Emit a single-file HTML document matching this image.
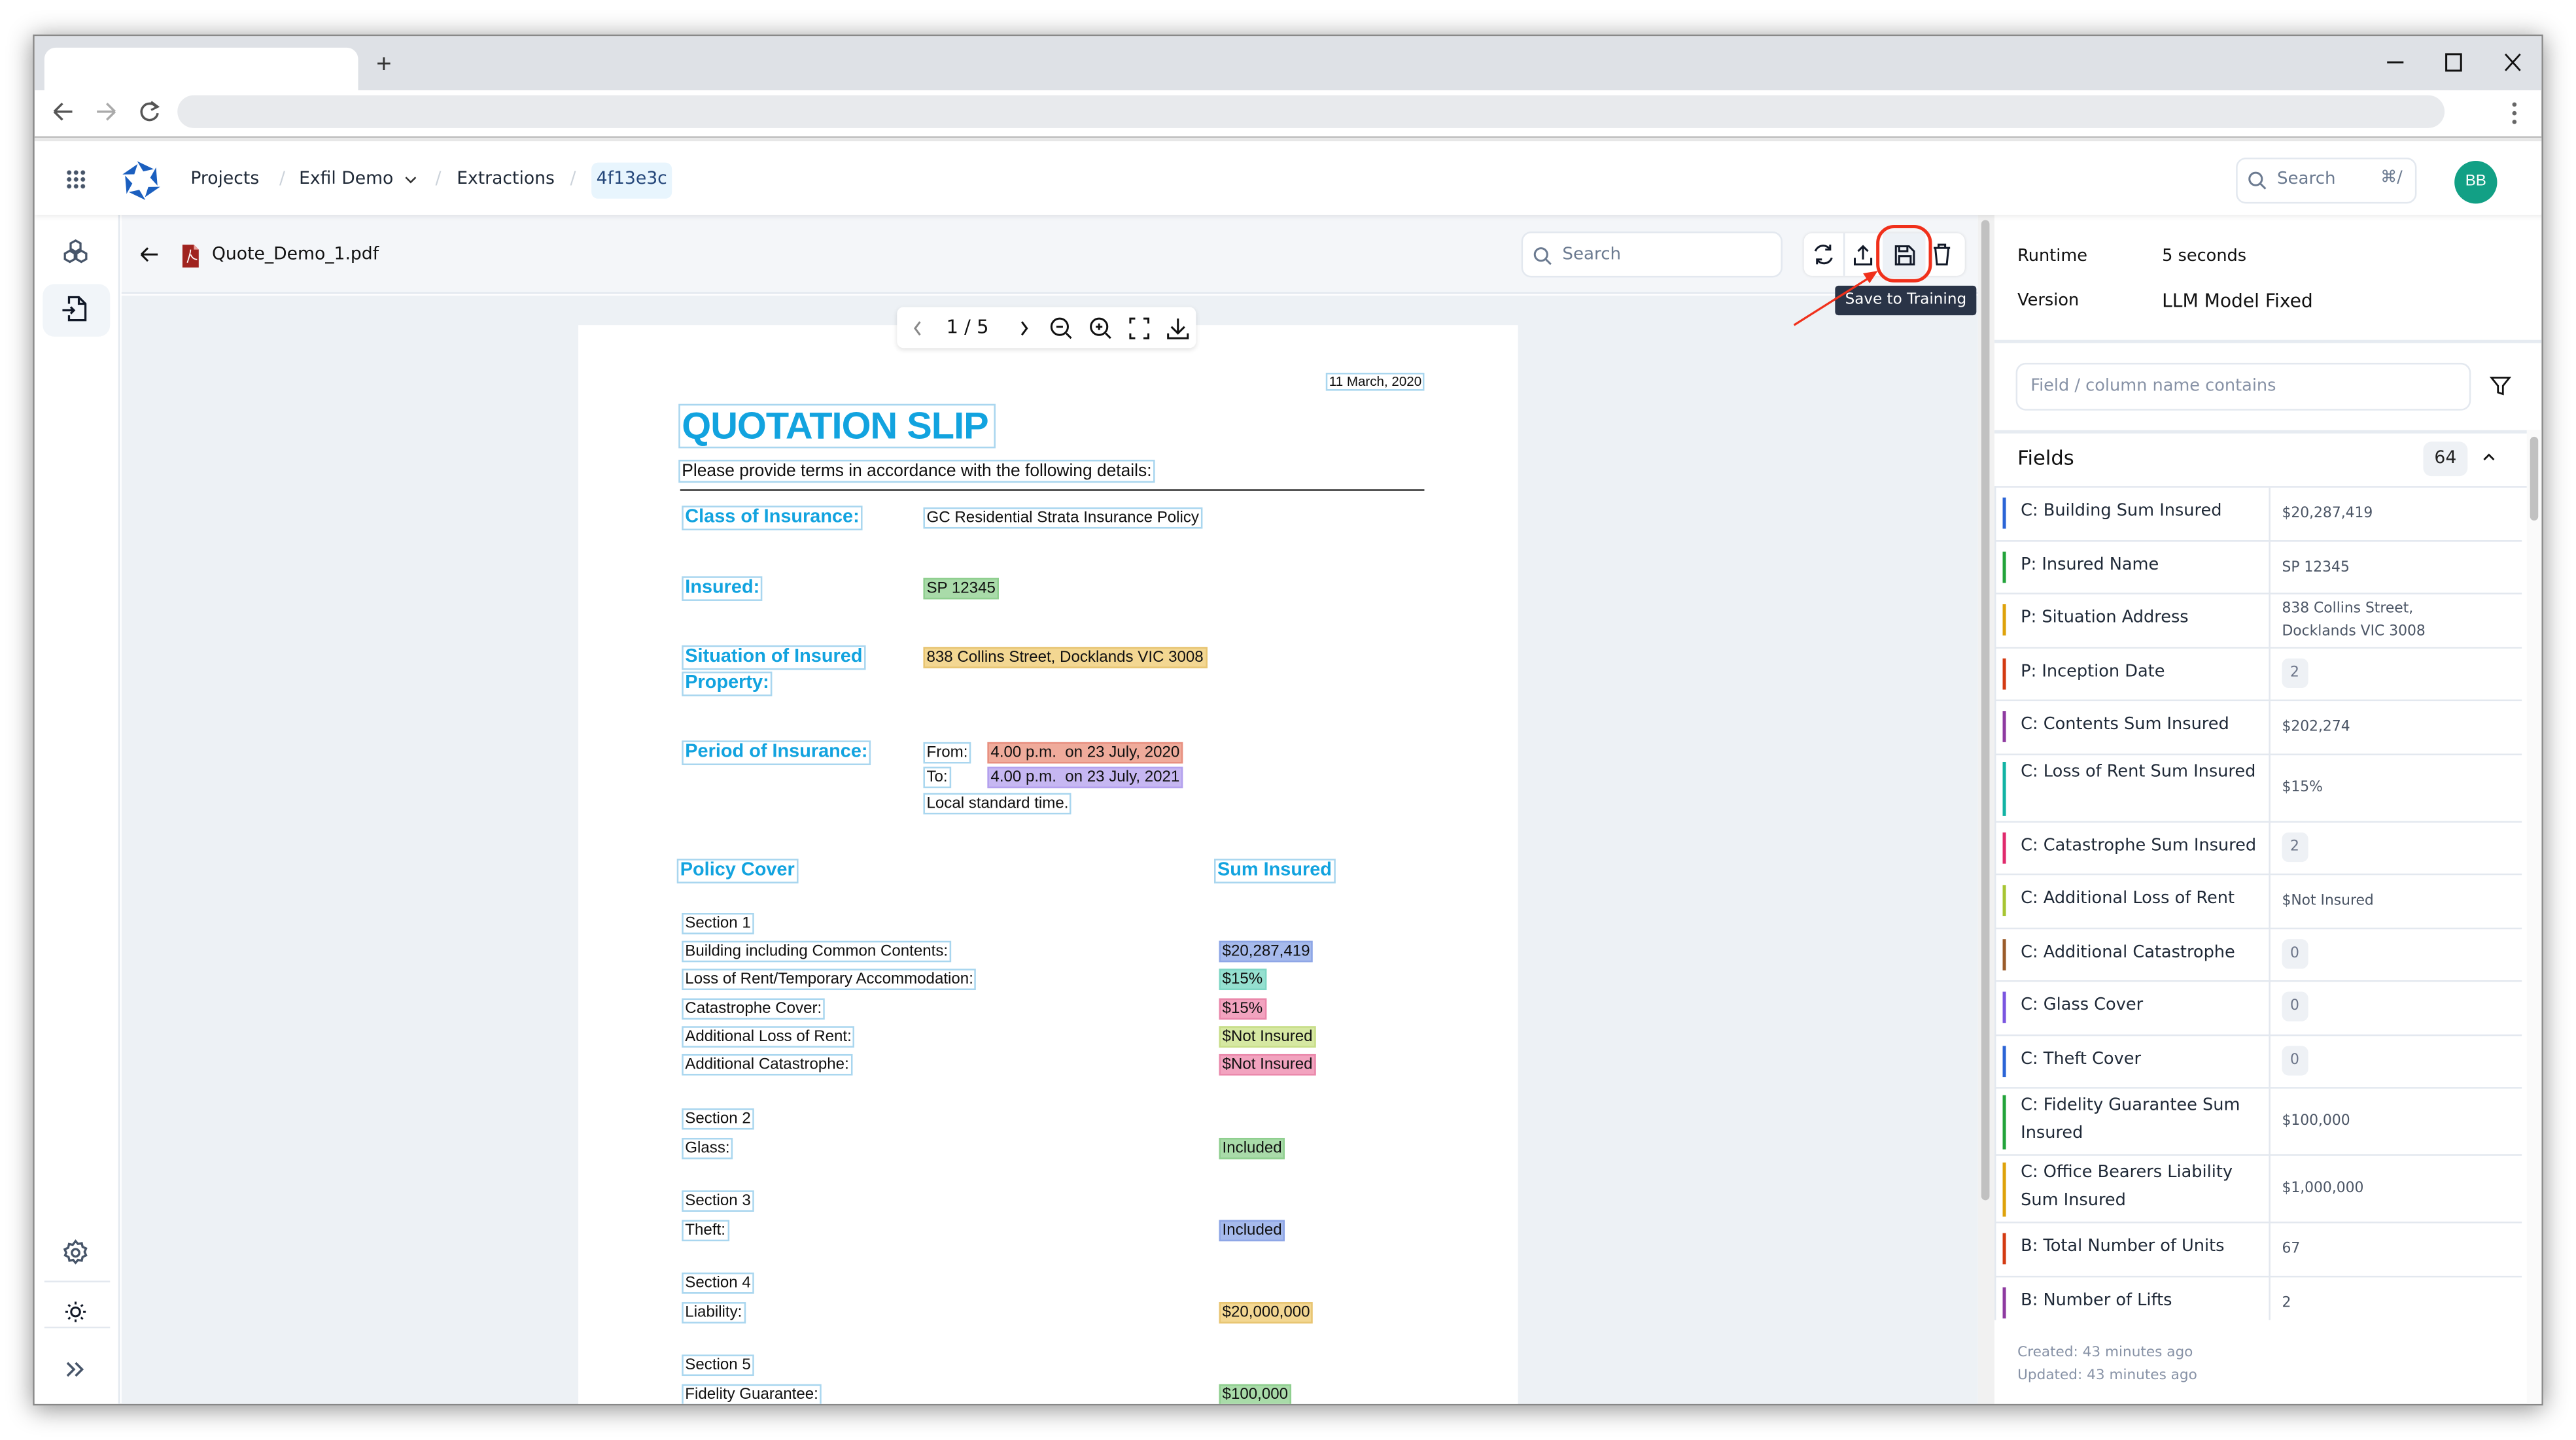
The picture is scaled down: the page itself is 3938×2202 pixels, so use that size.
<!DOCTYPE html>
<html><head><meta charset="utf-8"><style>
*{box-sizing:border-box;margin:0;padding:0}
html,body{width:3938px;height:2202px;overflow:hidden;background:#fff}
#s{position:absolute;left:0;top:0;width:1568px;height:877px;transform:scale(2.5115,2.5108);transform-origin:0 0;font-family:"DejaVu Sans","Liberation Sans",sans-serif;color:#1f2937}
.a{position:absolute}
.win{position:absolute;left:20px;top:21px;width:1528px;height:835px;background:#fff;box-shadow:0 2px 14px rgba(0,0,0,.45);overflow:hidden;border:1px solid #888}
.ui{font-family:"DejaVu Sans",sans-serif}
.pdf{font-family:"Liberation Sans",Arial,sans-serif;color:#111}
.bx{position:absolute;border:1px solid #a9d6ef;padding:0 1px;line-height:1.15;white-space:nowrap}
.lb{color:#12a3df;font-weight:bold;font-size:11.5px}
.tx{font-size:9.6px}
.row{position:absolute;left:0;width:320px;border-bottom:1px solid #e3e8ef}
.row .bar{position:absolute;left:4px;width:2.3px}
.row .k{position:absolute;left:15px;font-size:10.2px;color:#1f2937;line-height:16.5px;width:150px}
.row .v{position:absolute;left:174px;font-size:8.7px;color:#4b5565;line-height:14px}
.row .c{position:absolute;left:166px;top:0;bottom:-1px;border-left:1px solid #e3e8ef}
.pill{display:inline-block;background:#eef1f5;border-radius:4px;padding:2px 5px;color:#6b7488}
</style></head><body><div id="s">
<div class="win">
 <div class="a" style="left:0;top:0;width:1528px;height:33px;background:#dee1e6"></div>
 <div class="a" style="left:6px;top:7px;width:191px;height:27px;background:#fff;border-radius:7px 7px 0 0"></div>
 <div class="a" style="left:208px;top:9px;font-size:16px;color:#333;font-family:'Liberation Sans'">+</div>
 <svg class="a" style="left:1428px;top:5px" width="100" height="22" viewBox="0 0 100 22"><path d="M4 11h10" stroke="#111" stroke-width="1.2"/><path d="M40 6h9v10h-9z" fill="none" stroke="#111" stroke-width="1.2"/><path d="M76 6l9 10M85 6l-9 10" stroke="#111" stroke-width="1.1"/></svg>
 <svg class="a" style="left:8px;top:37px" width="70" height="18" viewBox="0 0 70 18"><path d="M4 9h11M4 9l5-5M4 9l5 5" stroke="#555" stroke-width="1.4" fill="none"/><path d="M41 9H30M41 9l-5-5M41 9l-5 5" stroke="#aaa" stroke-width="1.4" fill="none"/><path d="M66 6a5 5 0 1 0 1 4" stroke="#555" stroke-width="1.4" fill="none"/><path d="M63 3l4 3-4 2" stroke="#555" stroke-width="1.3" fill="none"/></svg>
 <div class="a" style="left:87px;top:36px;width:1380px;height:20px;background:#e8eaed;border-radius:10px"></div>
 <div class="a" style="left:1508px;top:39px;width:3px;height:15px;background:radial-gradient(circle,#666 1.2px,transparent 1.4px) 0 0/3px 5.3px"></div>
 <div class="a" style="left:0;top:61px;width:1528px;height:1px;background:#bbb"></div>
 <div class="a" style="left:0;top:62px;width:1528px;height:2px;background:#e9e9e9"></div>
 <div class="a" style="left:0;top:64px;width:1528px;height:45px;background:#fff;box-shadow:0 1px 3px rgba(0,0,0,.08);z-index:2">
  <div class="a" style="left:19px;top:17px;width:12px;height:12px;background:radial-gradient(circle,#475569 1.2px,transparent 1.5px) 0 0/4.2px 4.2px"></div>
  <svg class="a" style="left:52px;top:11px" width="26" height="26" viewBox="-13 -13 26 26"><defs><polygon id="tr" points="-2.5,-11.8 7.6,-7 1.2,-5.6"/></defs><g fill="#1b5fbf"><use href="#tr"/><use href="#tr" transform="rotate(60)"/><use href="#tr" transform="rotate(120)"/><use href="#tr" transform="rotate(180)"/><use href="#tr" transform="rotate(240)"/><use href="#tr" transform="rotate(300)"/></g></svg>
  <div class="a ui" style="left:95px;top:17px;font-size:10.6px;color:#1f2937">Projects</div>
  <div class="a ui" style="left:149px;top:17px;font-size:10.6px;color:#cbd2da">/</div>
  <div class="a ui" style="left:161px;top:17px;font-size:10.6px;color:#1f2937">Exfil Demo</div>
  <svg class="a" style="left:225px;top:21px" width="8" height="6"><path d="M1 1l3 3 3-3" stroke="#333" fill="none" stroke-width="1"/></svg>
  <div class="a ui" style="left:244px;top:17px;font-size:10.6px;color:#cbd2da">/</div>
  <div class="a ui" style="left:257px;top:17px;font-size:10.6px;color:#1f2937">Extractions</div>
  <div class="a ui" style="left:326px;top:17px;font-size:10.6px;color:#cbd2da">/</div>
  <div class="a ui" style="left:339px;top:13px;width:49px;height:22px;background:#e8f5fd;border-radius:4px;font-size:10.6px;color:#25477a;padding:4px 0 0 3px">4f13e3c</div>
  <div class="a" style="left:1340px;top:10px;width:110px;height:28px;border:1px solid #e3e8ef;border-radius:6px"></div>
  <svg class="a" style="left:1347px;top:18px" width="12" height="12"><circle cx="5" cy="5" r="3.8" stroke="#6b7a90" stroke-width="1.2" fill="none"/><path d="M8 8l3 3" stroke="#6b7a90" stroke-width="1.2"/></svg>
  <div class="a ui" style="left:1365px;top:17px;font-size:10.4px;color:#6b7a90">Search</div>
  <div class="a ui" style="left:1428px;top:17px;font-size:10px;color:#6b7a90">⌘/</div>
  <div class="a" style="left:1473px;top:12px;width:26px;height:26px;background:#12a085;border-radius:50%;color:#fff;font-size:9.6px;text-align:center;line-height:26px;font-family:'Liberation Sans'">BB</div>
 </div>
 <div class="a" style="left:0;top:109px;width:52px;height:726px;background:#fff;border-right:1px solid #e3e8ef"></div>
 <svg class="a" style="left:16px;top:123px" width="18" height="18" viewBox="0 0 18 18" fill="none" stroke="#475569" stroke-width="1.3"><path d="M9 1.5l3 1.7v3.4L9 8.3 6 6.6V3.2z"/><path d="M5.5 7.7l3 1.7v3.4l-3 1.7-3-1.7V9.4z"/><path d="M12.5 7.7l3 1.7v3.4l-3 1.7-3-1.7V9.4z"/></svg>
 <div class="a" style="left:5px;top:151px;width:41px;height:32px;background:#f1f5f9;border-radius:7px"></div>
 <svg class="a" style="left:16px;top:157px" width="18" height="18" viewBox="0 0 18 18" fill="none" stroke="#111827" stroke-width="1.3"><path d="M5 6V2h6l4 4v10H5v-3"/><path d="M11 2v4h4"/><path d="M1 10h7M6 8l2 2-2 2"/></svg>
 <svg class="a" style="left:16px;top:732px" width="18" height="18" viewBox="0 0 24 24" fill="none" stroke="#475569" stroke-width="1.8"><circle cx="12" cy="12" r="3"/><path d="M12 2.5l2 2.3 3-.6.7 3 2.8 1.3-1.2 2.8 1.2 2.8-2.8 1.3-.7 3-3-.6-2 2.3-2-2.3-3 .6-.7-3-2.8-1.3L4.4 12 3.2 9.2 6 7.9l.7-3 3 .6z"/></svg>
 <div class="a" style="left:6px;top:758px;width:40px;height:1px;background:#e3e8ef"></div>
 <svg class="a" style="left:18px;top:770px" width="14" height="14" viewBox="0 0 14 14" stroke="#111827" stroke-width="1.2" fill="none"><circle cx="7" cy="7" r="2.7"/><path d="M7 .8v1.6M7 11.6v1.6M.8 7h1.6M11.6 7h1.6M2.6 2.6l1.1 1.1M10.3 10.3l1.1 1.1M2.6 11.4l1.1-1.1M10.3 3.7l1.1-1.1"/></svg>
 <div class="a" style="left:6px;top:786px;width:40px;height:1px;background:#e3e8ef"></div>
 <svg class="a" style="left:19px;top:807px" width="12" height="10" viewBox="0 0 12 10" stroke="#475569" stroke-width="1.4" fill="none"><path d="M1 1l4 4-4 4M6 1l4 4-4 4"/></svg>
 <div class="a" style="left:53px;top:109px;width:1130px;height:48px;background:#f4f6f9;border-bottom:1px solid #e3e8ef"></div>
 <svg class="a" style="left:64px;top:128px" width="12" height="10" viewBox="0 0 12 10" stroke="#111" stroke-width="1.2" fill="none"><path d="M1 5h10M1 5l4-4M1 5l4 4"/></svg>
 <svg class="a" style="left:90px;top:127px" width="10" height="14" viewBox="0 0 10 14"><path d="M0 0h7l3 3v11H0z" fill="#a0231f"/><path d="M7 0v3h3" fill="#e9a39f"/><path d="M3 11c1-3 2-6 2-8M5 6c1 2 2 3 4 3" stroke="#fff" stroke-width=".7" fill="none"/></svg>
 <div class="a ui" style="left:108px;top:127px;font-size:10.6px;color:#111">Quote_Demo_1.pdf</div>
 <div class="a" style="left:905px;top:119px;width:159px;height:28px;background:#fff;border:1px solid #e3e8ef;border-radius:6px"></div>
 <svg class="a" style="left:912px;top:128px" width="12" height="12"><circle cx="5" cy="5" r="3.8" stroke="#6b7a90" stroke-width="1.2" fill="none"/><path d="M8 8l3 3" stroke="#6b7a90" stroke-width="1.2"/></svg>
 <div class="a ui" style="left:930px;top:127px;font-size:10.4px;color:#6b7a90">Search</div>
 <div class="a" style="left:1077px;top:120px;width:98px;height:26px;background:#fff;border-radius:5px;box-shadow:0 0 2px rgba(0,0,0,.12)"></div>
 <div class="a" style="left:1101px;top:120px;width:1px;height:26px;background:#e3e8ef"></div>
 <div class="a" style="left:1125px;top:120px;width:26px;height:26px;background:#edf1f6"></div>
 <svg class="a" style="left:1081px;top:125px" width="96" height="16" viewBox="0 0 96 16" fill="none" stroke="#111827" stroke-width="1.2"><path d="M3 6a5 5 0 0 1 9-1M13 10a5 5 0 0 1-9 1"/><path d="M12 2v3H9M4 14v-3h3"/><path d="M32 3v8M29 6l3-3 3 3M27 10v4h10v-4"/><path d="M52 3h8l3 3v8H52z"/><path d="M54 3v3h5V3M54 14V9h7v5"/><path d="M75 4h10M78 4V2h4v2M76 4l1 10h6l1-10"/></svg>
 <div class="a" style="left:53px;top:158px;width:1130px;height:677px;background:#edf1f5"></div>
 <div class="a" style="left:1183px;top:109px;width:10px;height:726px;background:#f1f1f1"></div>
 <div class="a" style="left:1185px;top:112px;width:5px;height:597px;background:#c1c1c1;border-radius:3px"></div>
 <div class="a pdf" style="left:331px;top:176px;width:572px;height:670px;background:#fff">
  <div class="bx" style="left:455px;top:29px;font-size:8.2px">11 March, 2020</div>
  <div class="bx" style="left:61px;top:48px;width:193px;height:27px;font-size:23px;font-weight:bold;color:#12a3df;line-height:25px;letter-spacing:-.4px">QUOTATION SLIP</div>
  <div class="bx" style="left:61px;top:82px;font-size:10.5px">Please provide terms in accordance with the following details:</div>
  <div class="a" style="left:62px;top:100px;width:453px;height:1px;background:#333"></div>
  <div class="bx lb" style="left:63px;top:110px">Class of Insurance:</div>
  <div class="bx tx" style="left:210px;top:111px">GC Residential Strata Insurance Policy</div>
  <div class="bx lb" style="left:63px;top:153px">Insured:</div>
  <div class="bx tx" style="left:210px;top:154px;background:#a9dba9;border-color:#8fcf8f">SP 12345</div>
  <div class="bx lb" style="left:63px;top:195px">Situation of Insured</div>
  <div class="bx lb" style="left:63px;top:211px">Property:</div>
  <div class="bx tx" style="left:210px;top:196px;background:#f3d792;border-color:#e8c572">838 Collins Street, Docklands VIC 3008</div>
  <div class="bx lb" style="left:63px;top:253px">Period of Insurance:</div>
  <div class="bx tx" style="left:210px;top:254px">From:</div>
  <div class="bx tx" style="left:249px;top:254px;background:#efab9b;border-color:#e89080">4.00 p.m.&nbsp; on 23 July, 2020</div>
  <div class="bx tx" style="left:210px;top:269px">To:</div>
  <div class="bx tx" style="left:249px;top:269px;background:#c6b7f2;border-color:#b3a0ee">4.00 p.m.&nbsp; on 23 July, 2021</div>
  <div class="bx tx" style="left:210px;top:285px">Local standard time.</div>
  <div class="bx lb" style="left:60px;top:325px">Policy Cover</div>
  <div class="bx lb" style="left:387px;top:325px">Sum Insured</div>
  <div class="bx tx" style="left:63px;top:358px">Section 1</div>
  <div class="bx tx" style="left:63px;top:375px">Building including Common Contents:</div>
  <div class="bx tx" style="left:63px;top:392px">Loss of Rent/Temporary Accommodation:</div>
  <div class="bx tx" style="left:63px;top:410px">Catastrophe Cover:</div>
  <div class="bx tx" style="left:63px;top:427px">Additional Loss of Rent:</div>
  <div class="bx tx" style="left:63px;top:444px">Additional Catastrophe:</div>
  <div class="bx tx" style="left:390px;top:375px;background:#a6baec;border-color:#8ea6e6">$20,287,419</div>
  <div class="bx tx" style="left:390px;top:392px;background:#95e0d0;border-color:#7fd6c4">$15%</div>
  <div class="bx tx" style="left:390px;top:410px;background:#f2a3bf;border-color:#ea88ab">$15%</div>
  <div class="bx tx" style="left:390px;top:427px;background:#d6e8a2;border-color:#c8de88">$Not Insured</div>
  <div class="bx tx" style="left:390px;top:444px;background:#f2a3bf;border-color:#ea88ab">$Not Insured</div>
  <div class="bx tx" style="left:63px;top:477px">Section 2</div>
  <div class="bx tx" style="left:63px;top:495px">Glass:</div>
  <div class="bx tx" style="left:390px;top:495px;background:#a9dba9;border-color:#8fcf8f">Included</div>
  <div class="bx tx" style="left:63px;top:527px">Section 3</div>
  <div class="bx tx" style="left:63px;top:545px">Theft:</div>
  <div class="bx tx" style="left:390px;top:545px;background:#a6baec;border-color:#8ea6e6">Included</div>
  <div class="bx tx" style="left:63px;top:577px">Section 4</div>
  <div class="bx tx" style="left:63px;top:595px">Liability:</div>
  <div class="bx tx" style="left:390px;top:595px;background:#f3d792;border-color:#e8c572">$20,000,000</div>
  <div class="bx tx" style="left:63px;top:627px">Section 5</div>
  <div class="bx tx" style="left:63px;top:645px">Fidelity Guarantee:</div>
  <div class="bx tx" style="left:390px;top:645px;background:#a9dba9;border-color:#8fcf8f">$100,000</div>
 </div>
 <div class="a" style="left:525px;top:165px;width:182px;height:25px;background:#fff;border-radius:4px;box-shadow:0 1px 3px rgba(0,0,0,.12)"></div>
 <svg class="a" style="left:530px;top:170px" width="175" height="16" viewBox="0 0 175 16" fill="none" stroke="#111" stroke-width="1.2"><path d="M9 4l-3 4 3 4" stroke="#888"/><path d="M71 4l3 4-3 4"/><circle cx="94" cy="7" r="5"/><path d="M98 11l3 3M92 7h4"/><circle cx="118" cy="7" r="5"/><path d="M122 11l3 3M116 7h4M118 5v4"/><path d="M137 5V2h3M145 2h3v3M148 11v3h-3M140 14h-3v-3"/><path d="M166 2v9M162 7l4 4 4-4M160 11v3h12v-3"/></svg>
 <div class="a ui" style="left:555px;top:170px;font-size:11.5px;color:#111">1 / 5</div>
 <div class="a" style="left:1193px;top:109px;width:335px;height:726px;background:#fff"></div>
 <div class="a ui" style="left:1207px;top:129px;font-size:10.2px;color:#111">Runtime</div>
 <div class="a ui" style="left:1295px;top:129px;font-size:10.2px;color:#111">5 seconds</div>
 <div class="a ui" style="left:1207px;top:156px;font-size:10.2px;color:#111">Version</div>
 <div class="a ui" style="left:1295px;top:155px;font-size:11.2px;color:#111">LLM Model Fixed</div>
 <div class="a" style="left:1193px;top:185px;width:335px;height:2px;background:#e6ebf1"></div>
 <div class="a" style="left:1206px;top:199px;width:277px;height:29px;border:1px solid #e3e8ef;border-radius:6px"></div>
 <div class="a ui" style="left:1215px;top:208px;font-size:10.2px;color:#8792a6">Field / column name contains</div>
 <svg class="a" style="left:1494px;top:206px" width="14" height="14" viewBox="0 0 14 14" fill="none" stroke="#111" stroke-width="1.1"><path d="M1.5 2h11L8.5 7v5l-3-1V7z"/></svg>
 <div class="a" style="left:1193px;top:240px;width:335px;height:2px;background:#e6ebf1"></div>
 <div class="a ui" style="left:1207px;top:250px;font-size:12.2px;color:#111">Fields</div>
 <div class="a ui" style="left:1454px;top:247px;width:27px;height:21px;background:#eef1f5;border-radius:5px;font-size:10.6px;color:#222;text-align:center;line-height:21px">64</div>
 <svg class="a" style="left:1490px;top:253px" width="8" height="6"><path d="M1 5l3-3 3 3" stroke="#111" fill="none" stroke-width="1.1"/></svg>
 <div class="a" style="left:1517px;top:240px;width:10px;height:595px;background:#fafafa"></div>
 <div class="a" style="left:1519px;top:244px;width:5px;height:51px;background:#c1c1c1;border-radius:3px"></div>
 <div class="a" style="left:1193px;top:274px;width:324px;height:1px;background:#e3e8ef"></div>
 <div class="a" style="left:1193px;top:274px;width:324px;height:508px;overflow:hidden;border-left:1px solid #e3e8ef">
  <div class="row" style="top:1px;height:32.5px"><div class="c"></div><div class="bar" style="top:6px;height:19px;background:#2b64d6"></div><div class="k" style="top:7px">C: Building Sum Insured</div><div class="v" style="top:9px">$20,287,419</div></div>
  <div class="row" style="top:33.5px;height:32.5px"><div class="c"></div><div class="bar" style="top:6px;height:19px;background:#22a33a"></div><div class="k" style="top:7px">P: Insured Name</div><div class="v" style="top:9px">SP 12345</div></div>
  <div class="row" style="top:66px;height:32.5px"><div class="c"></div><div class="bar" style="top:6px;height:19px;background:#dea20a"></div><div class="k" style="top:7px">P: Situation Address</div><div class="v" style="top:2px">838 Collins Street,<br>Docklands VIC 3008</div></div>
  <div class="row" style="top:98.5px;height:32.5px"><div class="c"></div><div class="bar" style="top:6px;height:19px;background:#d33a12"></div><div class="k" style="top:7px">P: Inception Date</div><div class="v" style="top:6px"><span class="pill">2</span></div></div>
  <div class="row" style="top:131px;height:32.5px"><div class="c"></div><div class="bar" style="top:6px;height:19px;background:#8e3aa0"></div><div class="k" style="top:7px">C: Contents Sum Insured</div><div class="v" style="top:9px">$202,274</div></div>
  <div class="row" style="top:163.5px;height:41px"><div class="c"></div><div class="bar" style="top:4px;height:33px;background:#12b3a4"></div><div class="k" style="top:3px">C: Loss of Rent Sum Insured</div><div class="v" style="top:13px">$15%</div></div>
  <div class="row" style="top:204.5px;height:32.5px"><div class="c"></div><div class="bar" style="top:6px;height:19px;background:#e02a6c"></div><div class="k" style="top:7px;width:170px">C: Catastrophe Sum Insured</div><div class="v" style="top:6px"><span class="pill">2</span></div></div>
  <div class="row" style="top:237px;height:32.5px"><div class="c"></div><div class="bar" style="top:6px;height:19px;background:#a7c532"></div><div class="k" style="top:7px">C: Additional Loss of Rent</div><div class="v" style="top:9px">$Not Insured</div></div>
  <div class="row" style="top:269.5px;height:32.5px"><div class="c"></div><div class="bar" style="top:6px;height:19px;background:#9a5b2a"></div><div class="k" style="top:7px">C: Additional Catastrophe</div><div class="v" style="top:6px"><span class="pill">0</span></div></div>
  <div class="row" style="top:302px;height:32.5px"><div class="c"></div><div class="bar" style="top:6px;height:19px;background:#7a55e0"></div><div class="k" style="top:7px">C: Glass Cover</div><div class="v" style="top:6px"><span class="pill">0</span></div></div>
  <div class="row" style="top:334.5px;height:32.5px"><div class="c"></div><div class="bar" style="top:6px;height:19px;background:#2b64d6"></div><div class="k" style="top:7px">C: Theft Cover</div><div class="v" style="top:6px"><span class="pill">0</span></div></div>
  <div class="row" style="top:367px;height:41px"><div class="c"></div><div class="bar" style="top:4px;height:33px;background:#22a33a"></div><div class="k" style="top:3px">C: Fidelity Guarantee Sum Insured</div><div class="v" style="top:13px">$100,000</div></div>
  <div class="row" style="top:408px;height:41px"><div class="c"></div><div class="bar" style="top:4px;height:33px;background:#dea20a"></div><div class="k" style="top:3px">C: Office Bearers Liability Sum Insured</div><div class="v" style="top:13px">$1,000,000</div></div>
  <div class="row" style="top:449px;height:32.5px"><div class="c"></div><div class="bar" style="top:6px;height:19px;background:#d33a12"></div><div class="k" style="top:7px">B: Total Number of Units</div><div class="v" style="top:9px">67</div></div>
  <div class="row" style="top:481.5px;height:32.5px"><div class="c"></div><div class="bar" style="top:6px;height:19px;background:#8e3aa0"></div><div class="k" style="top:7px">B: Number of Lifts</div><div class="v" style="top:9px">2</div></div>
 </div>
 <div class="a ui" style="left:1207px;top:795px;font-size:8.6px;color:#8792a6;line-height:14px">Created: 43 minutes ago<br>Updated: 43 minutes ago</div>
 <div class="a" style="left:1121px;top:115px;width:34px;height:35px;border:2px solid #f0301b;border-radius:11px;z-index:5"></div>
 <div class="a ui" style="left:1096px;top:152px;width:86px;height:18px;background:#2a3447;border-radius:2px;color:#fff;font-size:9.2px;line-height:18px;text-align:center;z-index:5">Save to Training</div>
 <svg class="a" style="left:1065px;top:140px;z-index:6" width="60" height="40" viewBox="0 0 60 40"><path d="M6 36L52 7" stroke="#f0301b" stroke-width="1.3"/><path d="M57 3l-9 1.5 4 6z" fill="#f0301b"/></svg>
</div>
</div></body></html>
